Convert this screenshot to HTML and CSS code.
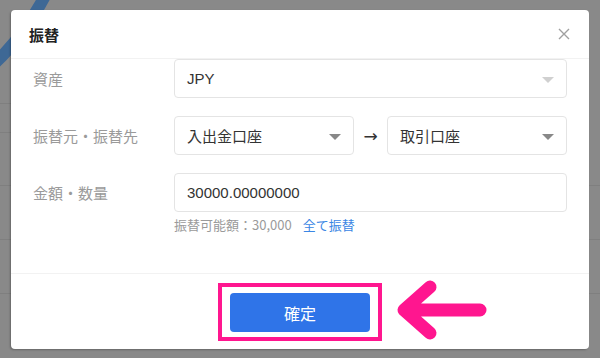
FILE: index.html
```html
<!DOCTYPE html>
<html lang="ja">
<head>
    <meta charset="UTF-8">
    <title>振替</title>
    <link rel="stylesheet" href="styles.css">
</head>
<body>
<div class="page">
    <svg class="deco" width="60" height="70" viewBox="0 0 60 70">
        <path d="M -6 64 Q 24 36 46 -6" fill="none" stroke="#3e6895" stroke-width="12"/>
    </svg>
    <div class="rows">
        <div class="row short"></div>
        <div class="row short"></div>
        <div class="row"></div>
        <div class="row"></div>
        <div class="row"></div>
    </div>
</div>

<div class="modal">
    <div class="modal-head">
        <span class="modal-title">振替</span>
        <svg class="close" width="12" height="12" viewBox="0 0 12 12">
            <path d="M1 1 L11 11 M11 1 L1 11" stroke="#a0a0a0" stroke-width="1.4"/>
        </svg>
    </div>
    <div class="modal-body">
        <div class="field">
            <label>資産</label>
            <div class="control">
                <div class="select disabled">JPY<i class="caret"></i></div>
            </div>
        </div>
        <div class="field">
            <label>振替元・振替先</label>
            <div class="control pair">
                <div class="select">入出金口座<i class="caret"></i></div>
                <span class="to">→</span>
                <div class="select">取引口座<i class="caret"></i></div>
            </div>
        </div>
        <div class="field top">
            <label>金額・数量</label>
            <div class="control">
                <div class="input">30000.00000000</div>
                <p class="hint">振替可能額：30,000<a href="#">全て振替</a></p>
            </div>
        </div>
    </div>
    <div class="modal-foot">
        <div class="mark">
            <button class="btn">確定</button>
        </div>
    </div>
</div>

<svg class="pointer" width="100" height="70" viewBox="390 275 100 70">
    <path d="M 480 310 L 408 310 M 430 287 L 404 310 L 430 333" fill="none" stroke="#ff168f" stroke-width="13" stroke-linecap="round" stroke-linejoin="round"/>
</svg>
</body>
</html>
```

FILE: styles.css
```css
* {
    padding: 0;
    margin: 0;
    box-sizing: border-box;
}

body {
    width: 600px;
    height: 358px;
    background: #898989;
    font-family: "Liberation Sans", "Noto Sans CJK JP", sans-serif;
    color: #333;
    position: relative;
    overflow: hidden;
}

.page {
    position: relative;
    height: 358px;
}

.deco {
    position: absolute;
    left: 0;
    top: 0;
}

.rows {
    padding-top: 103px;
}

.row {
    border-top: 1px solid #7f7f7f;
    height: 54px;
}

.row.short {
    width: 300px;
    height: 29px;
}

.row.short + .row.short {
    height: 53px;
}

.modal {
    position: absolute;
    left: 11px;
    top: 10px;
    width: 578px;
    height: 339px;
    background: #fff;
    border-radius: 4px;
    box-shadow: -1px 1px 2px rgba(0, 0, 0, 0.25);
    display: flex;
    flex-direction: column;
}

.modal-head {
    height: 49px;
    border-bottom: 1px solid #f2f2f2;
    padding: 0 19px 0 18px;
    display: flex;
    align-items: center;
    justify-content: space-between;
}

.modal-title {
    font-family: "Noto Sans CJK JP", sans-serif;
    font-size: 15px;
    font-weight: bold;
    color: #222;
}

.modal-body {
    flex: 1;
    padding: 0 22px;
    display: flex;
    flex-direction: column;
    gap: 18px;
}

.field {
    display: flex;
    align-items: center;
}

.field.top {
    align-items: flex-start;
}

.field label {
    width: 141px;
    flex: none;
    font-family: "Noto Sans CJK JP", sans-serif;
    font-size: 15px;
    color: #9a9a9a;
}

.field.top label {
    line-height: 39px;
}

.control {
    flex: 1;
}

.control.pair {
    display: flex;
    align-items: center;
}

.select,
.input {
    height: 39px;
    border: 1px solid #e4e4e4;
    border-radius: 4px;
    padding: 0 12px;
    display: flex;
    align-items: center;
    font-size: 15px;
    color: #333;
    position: relative;
}

.pair .select {
    width: 180px;
}

.to {
    width: 33px;
    text-align: center;
    font-family: "DejaVu Sans", sans-serif;
    font-size: 17px;
    color: #333;
}

.caret {
    position: absolute;
    right: 12px;
    top: 17px;
    border-left: 6px solid transparent;
    border-right: 6px solid transparent;
    border-top: 6px solid #888;
}

.select.disabled .caret {
    border-top-color: #d0d0d0;
}

.hint {
    margin-top: 4px;
    font-family: "Noto Sans CJK JP", sans-serif;
    font-size: 13px;
    line-height: 18px;
    color: #9a9a9a;
}

.hint a {
    margin-left: 11px;
    color: #3a86e4;
    text-decoration: none;
}

.modal-foot {
    border-top: 1px solid #f2f2f2;
    padding: 9px 0 8px;
    display: flex;
    justify-content: center;
}

.mark {
    border: 4px solid #ff168f;
    padding: 6px 8px 5px;
}

.btn {
    display: block;
    width: 140px;
    height: 39px;
    border: 0;
    border-radius: 4px;
    background: #2f74e8;
    color: #fff;
    font-family: "Noto Sans CJK JP", sans-serif;
    font-size: 16px;
}

.pointer {
    position: absolute;
    left: 390px;
    top: 275px;
}
```
